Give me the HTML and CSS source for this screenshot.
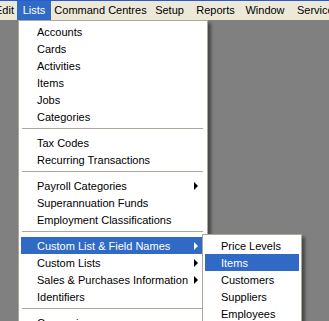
FILE: index.html
```html
<!DOCTYPE html>
<html lang="en">
<head>
    <meta charset="UTF-8">
    <title>Lists menu</title>
    <link rel="stylesheet" href="styles.css">
</head>
<body>

<div class="title-edge"></div>
<div class="menubar">
    <span class="bar-item w-edit">Edit</span>
    <span class="bar-item w-lists open">Lists</span>
    <span class="bar-item w-cc">Command Centres</span>
    <span class="bar-item w-setup">Setup</span>
    <span class="bar-item w-reports">Reports</span>
    <span class="bar-item w-window">Window</span>
    <span class="bar-item w-services">Services</span>
</div>

<div class="workspace">
    <div class="menu">
        <div class="menu-item">Accounts</div>
        <div class="menu-item">Cards</div>
        <div class="menu-item">Activities</div>
        <div class="menu-item">Items</div>
        <div class="menu-item">Jobs</div>
        <div class="menu-item">Categories</div>
        <div class="separator"></div>
        <div class="menu-item">Tax Codes</div>
        <div class="menu-item">Recurring Transactions</div>
        <div class="separator"></div>
        <div class="menu-item has-sub">Payroll Categories <span class="arrow"></span></div>
        <div class="menu-item">Superannuation Funds</div>
        <div class="menu-item">Employment Classifications</div>
        <div class="separator"></div>
        <div class="menu-item has-sub active">Custom List &amp; Field Names <span class="arrow"></span>
            <div class="menu submenu">
                <div class="menu-item">Price Levels</div>
                <div class="menu-item active">Items</div>
                <div class="menu-item">Customers</div>
                <div class="menu-item">Suppliers</div>
                <div class="menu-item">Employees</div>
            </div>
        </div>
        <div class="menu-item has-sub">Custom Lists <span class="arrow"></span></div>
        <div class="menu-item has-sub">Sales &amp; Purchases Information <span class="arrow"></span></div>
        <div class="menu-item">Identifiers</div>
        <div class="separator"></div>
        <div class="menu-item">Currencies</div>
    </div>
</div>

</body>
</html>
```

FILE: styles.css
```css
body {
    margin: 0;
    background-color: #808080;
    font-family: "Liberation Sans", Arial, sans-serif;
    font-size: 11px;
    color: #000;
    overflow: hidden;
}
.title-edge {
    height: 1px;
    background-color: #2a5bd7;
}
.menubar {
    display: flex;
    height: 19px;
    margin-left: -13px;
    background-color: #ece9d8;
    white-space: nowrap;
}
.bar-item {
    flex-shrink: 0;
    line-height: 19px;
    text-align: center;
}
.bar-item.open {
    background-color: #316ac5;
    color: #fff;
}
.w-edit { width: 27px; padding-right: 3px; text-align: right; }
.w-lists { width: 34px; }
.w-cc { width: 99px; }
.w-setup { width: 39px; }
.w-reports { width: 53px; }
.w-window { width: 46px; }
.w-services { width: 60px; text-align: left; padding-left: 9px; }

.workspace {
    position: relative;
    height: 301px;
}
.menu {
    position: absolute;
    left: 18px;
    top: 0;
    width: 182px;
    padding: 2px 4px 2px 2px;
    background-color: #fff;
    border: 1px solid #aca899;
    box-shadow: 3px 3px 3px rgba(0, 0, 0, 0.45);
}
.menu-item {
    position: relative;
    display: flex;
    justify-content: space-between;
    align-items: center;
    height: 17px;
    padding: 0 5px 0 16px;
    white-space: nowrap;
}
.menu-item.active {
    background-color: #316ac5;
    color: #fff;
}
.arrow {
    width: 0;
    height: 0;
    border-top: 4px solid transparent;
    border-bottom: 4px solid transparent;
    border-left: 4px solid #000;
}
.menu-item.active > .arrow {
    border-left-color: #fff;
}
.separator {
    margin: 3px 0 5px 1px;
    border-top: 1px solid #aca899;
}
.submenu {
    left: 181px;
    top: -3px;
    width: 94px;
    padding: 2px;
    color: #000;
    z-index: 2;
}
```
